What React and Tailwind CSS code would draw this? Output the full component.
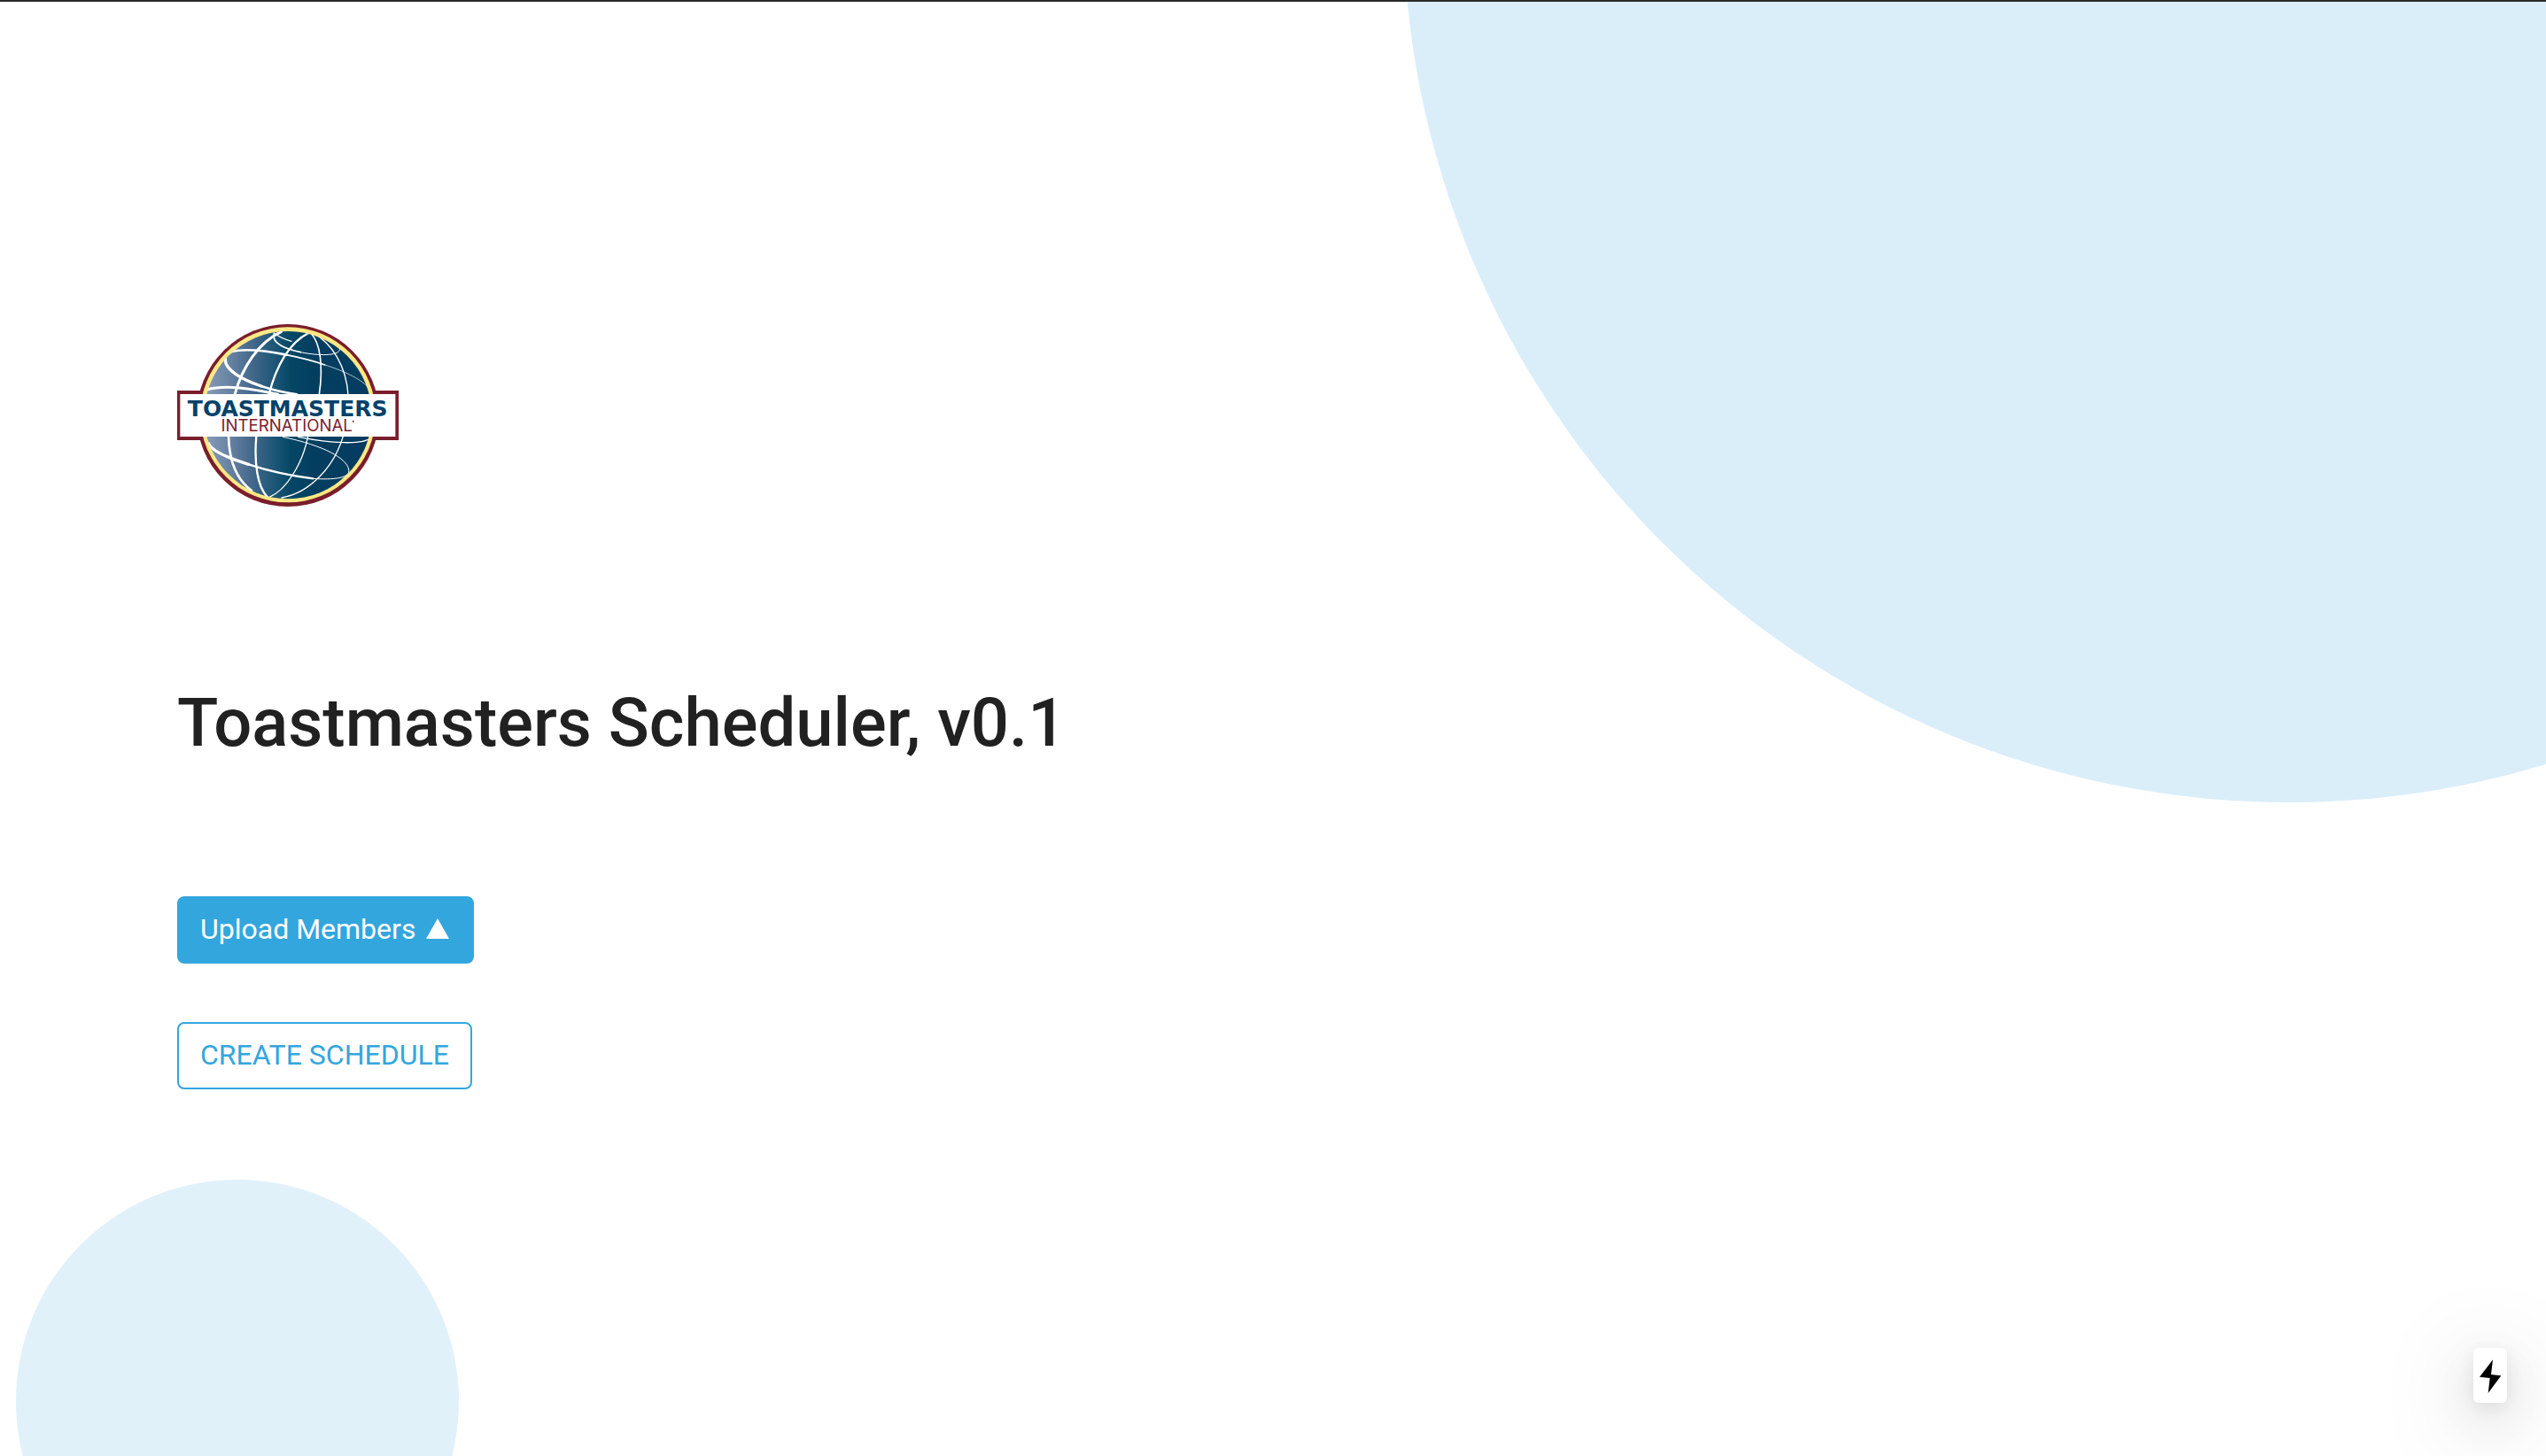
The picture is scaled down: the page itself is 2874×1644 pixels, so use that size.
function ToastmastersLogo() {
  return (
    <svg
      className="block w-[250px]"
      viewBox="60 45 750 624"
      role="img"
      aria-label="Toastmasters International"
    >
      <defs>
        <linearGradient id="globe" x1="0" y1="0" x2="1" y2="0">
          <stop offset="0" stopColor="#8a9db8" />
          <stop offset="0.14" stopColor="#6b85a4" />
          <stop offset="0.28" stopColor="#45698c" />
          <stop offset="0.42" stopColor="#1d5676" />
          <stop offset="0.52" stopColor="#044765" />
          <stop offset="0.65" stopColor="#033e60" />
          <stop offset="1" stopColor="#043c60" />
        </linearGradient>
        <clipPath id="globe-clip">
          <circle cx="435" cy="356" r="285" />
        </clipPath>
      </defs>
      <circle cx="435" cy="357" r="309" fill="#7a1e2c" />
      <rect x="60" y="273" width="750" height="168" fill="#7a1e2c" />
      <circle cx="435" cy="355" r="297" fill="#ffe885" />
      <circle cx="435" cy="356" r="284" fill="url(#globe)" />
      <g clipPath="url(#globe-clip)" fill="none" stroke="#fff" strokeLinecap="round">
        <path strokeWidth="9" d="M412 74C335 110 280 195 255 286" />
        <path strokeWidth="8" d="M234 428C236 510 262 575 312 612" />
        <path strokeWidth="7" d="M505 78C440 110 395 190 371 286" />
        <path strokeWidth="7" d="M328 428C320 520 332 600 366 634" />
        <path strokeWidth="5" d="M512 78C545 110 555 190 541 286" />
        <path strokeWidth="4" d="M503 428C485 520 430 610 372 634" />
        <path strokeWidth="4" d="M524 80C585 115 632 190 639 286" />
        <path strokeWidth="4" d="M622 428C592 530 510 620 414 636" />
        <path strokeWidth="5" d="M388 80C378 112 425 132 478 143" />
        <path strokeWidth="3" d="M478 143C550 158 618 154 610 130" />
        <path strokeWidth="4" d="M388 78C410 94 430 102 447 106" />
        <path strokeWidth="8" d="M244 141C290 130 365 139 430 152" />
        <path strokeWidth="5" d="M430 152C480 162 520 172 560 186" />
        <path strokeWidth="2" d="M560 186C630 208 690 238 710 266" />
        <path strokeWidth="8" d="M244 141C230 144 221 152 223 164" />
        <path strokeWidth="10" d="M223 164C218 202 280 236 345 258" />
        <path strokeWidth="8" d="M345 258C385 272 425 280 465 286" />
        <path strokeWidth="9" d="M160 270C225 252 310 266 402 286" />
        <path strokeWidth="10" d="M166 452C180 480 230 500 302 523" />
        <path strokeWidth="7" d="M302 523C380 549 450 562 520 571" />
        <path strokeWidth="3" d="M520 571C590 576 648 570 641 540C634 503 560 460 418 430" />
        <path strokeWidth="4" d="M470 430C580 452 690 458 718 432" />
      </g>
      <rect x="70" y="285" width="729" height="144" fill="#fff" />
      <text
        x="434"
        y="360"
        textAnchor="middle"
        className="fill-[#05426a] font-['DejaVu_Sans',sans-serif] text-[75px] font-bold"
      >
        TOASTMASTERS
      </text>
      <text
        x="431"
        y="412"
        textAnchor="middle"
        className="fill-[#7a1e2c] font-['Inter',sans-serif] text-[56px]"
      >
        INTERNATIONAL
      </text>
      <circle cx="656" cy="377" r="3" fill="#7a1e2c" />
    </svg>
  );
}

export default function App() {
  return (
    <div className="relative min-h-screen overflow-hidden border-t-2 border-[#2a2a2a] bg-white font-['Roboto',sans-serif] text-[#212121]">
      <div
        aria-hidden="true"
        className="absolute -top-[1096px] -right-[710px] size-[2000px] rounded-full bg-[#daeefa]"
      />
      <div
        aria-hidden="true"
        className="absolute left-[18px] -bottom-[188px] size-[500px] rounded-full bg-[#e1f1fa]"
      />

      <main className="relative flex flex-col items-start px-[200px] pt-[363px]">
        <ToastmastersLogo />
        <h1 className="mt-[195px] text-[76px] leading-[96px] font-medium">
          Toastmasters Scheduler, v0.1
        </h1>
        <button
          type="button"
          className="mt-[148px] flex items-center gap-3 rounded-lg border-2 border-[#33a6de] bg-[#33a6de] pt-[11px] pr-[26px] pb-[13px] pl-6 text-[32px] leading-[48px] text-white"
        >
          Upload Members
          <svg className="h-6 w-[26px]" viewBox="0 0 26 24" fill="currentColor" aria-hidden="true">
            <path d="M13 0 26 23H0Z" />
          </svg>
        </button>
        <button
          type="button"
          className="mt-[66px] rounded-lg border-2 border-[#33a6de] bg-white px-6 pt-[11px] pb-[13px] text-[32px] leading-[48px] text-[#33a6de]"
        >
          CREATE SCHEDULE
        </button>
      </main>

      <button
        type="button"
        aria-label="Quick actions"
        className="fixed right-[44px] bottom-[60px] flex h-[62px] w-[38px] items-center justify-center rounded-md bg-white pt-0.5 text-black shadow-[0_6px_24px_rgba(0,0,0,0.09),0_18px_64px_8px_rgba(0,0,0,0.07),0_20px_96px_32px_rgba(0,0,0,0.05)]"
      >
        <svg className="h-[38px] w-[25px]" viewBox="357 285 75 114" fill="currentColor" aria-hidden="true">
          <path d="M402 286 357 344 392 348 386 399 430 340 396 336Z" />
        </svg>
      </button>
    </div>
  );
}
